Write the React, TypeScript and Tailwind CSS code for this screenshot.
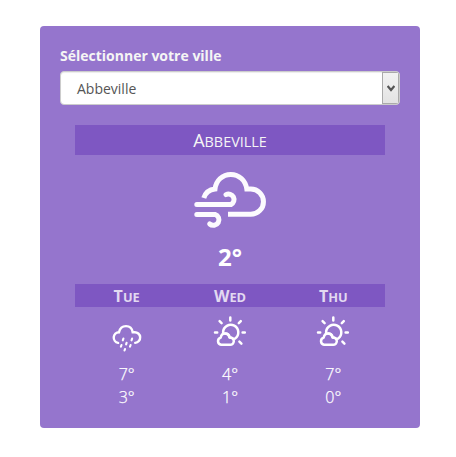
import React from 'react';

function GustsIcon() {
  return (
    <svg className="block h-16 w-20" viewBox="190 168 80 64" fill="none" stroke="#fcfafe" strokeWidth="5">
      <path d="M203.8 198 C205.3 193 209.5 189.6 215 189 C216 180.5 222.5 174.4 230.8 174.4 C239 174.4 245.6 180.4 246.8 189 H250.8 A12.65 12.65 0 0 1 250.8 214.3 H228" />
      <path strokeLinecap="round" d="M196.8 204.4 H231 A5.4 5.4 0 1 0 226 194.6" />
      <path strokeLinecap="round" d="M196.8 214.4 H215 A5.6 5.6 0 1 1 209.7 224" />
    </svg>
  );
}

function RainIcon() {
  return (
    <svg className="block h-9 w-9" viewBox="109.2 316 36 36" fill="none" stroke="#fff" strokeWidth="2.4" strokeLinecap="round">
      <path d="M118.3 342.9 A5.4 5.4 0 0 1 119.2 332.2 C120 328.4 122.8 326.1 126.2 326.1 C129.6 326.1 132.3 328.4 132.9 332.2 H134.6 A5.35 5.35 0 0 1 135.4 342.9" />
      <path strokeWidth="2.1" d="M123.6 338.6l-.6 1.7M132.3 338.6l-.6 1.7M126.8 342.7l-.5 1.7M121.7 345l-.6 1.7M130.8 345l-.6 1.7M125.2 349.1l-.5 1.4" />
    </svg>
  );
}

function SunCloudIcon() {
  return (
    <svg className="block h-9 w-9" viewBox="212.3 316 36 36" fill="none" stroke="#fff" strokeWidth="2.5" strokeLinecap="round" strokeLinejoin="round">
      <path d="M230.6 317.6v2.8M219.9 321.2l2 2M241.1 321.2l-2 2M215.3 332.4h2.2M242.9 332.4h2.2M239.7 341.6l2 2" />
      <path d="M223.4 332.2 A7.6 7.6 0 1 1 235.4 338.6" />
      <path d="M221.4 344.8 A3.7 3.7 0 0 1 221 337.6 C221.4 335.2 223 333.5 225.3 333.5 C227.8 333.5 229.3 335.3 229.8 337.6 L230.6 337.6 A3.6 3.6 0 0 1 230.4 344.8 Z" />
      <path d="M225.4 333.5 C228.4 333.6 229.6 335.2 230 337.4 C232 337.4 233.2 338 233.8 339.3" />
    </svg>
  );
}

function SmallCaps({ text }: { text: string }) {
  return (
    <span>
      {text[0]}
      <span className="text-[0.8em] uppercase">{text.slice(1)}</span>
    </span>
  );
}

const days = [
  { name: 'Tue', high: '7°', low: '3°', Icon: RainIcon },
  { name: 'Wed', high: '4°', low: '1°', Icon: SunCloudIcon },
  { name: 'Thu', high: '7°', low: '0°', Icon: SunCloudIcon },
];

export default function App() {
  return (
    <div className="h-[457px] w-[456px] bg-white pl-10 pt-[26px] font-['Open_Sans',sans-serif]">
      <div className="h-[402px] w-[380px] rounded-[4px] bg-[#9575cd] px-5 pt-5 text-[#f5f5f5]">
        <div className="h-[25px] text-sm font-bold leading-5">Sélectionner votre ville</div>
        <div className="flex h-[34px] w-[340px] overflow-hidden rounded-[4px] border border-[#ccc] bg-white shadow-[inset_0_1px_1px_rgba(0,0,0,0.075)]">
          <span className="flex-1 pl-4 text-sm leading-[34px] text-[#555]">Abbeville</span>
          <span className="flex w-[17px] items-center justify-center border border-[#aaa] bg-linear-to-b from-[#f2f2f2] to-[#e3e3e3]">
            <svg className="block h-[7px] w-2" viewBox="0 0 8 7" fill="none" stroke="#555" strokeWidth="2.2">
              <path d="M.6 1 4 5 7.4 1" />
            </svg>
          </span>
        </div>
        <div className="mx-[15px] mt-5">
          <div className="h-[30px] bg-[#7e57c2] text-center text-lg leading-[31px]">
            <SmallCaps text="Abbeville" />
          </div>
          <div className="mt-[13px] flex justify-center">
            <GustsIcon />
          </div>
          <div className="mt-[8px] h-[33px] text-center text-2xl font-bold leading-[33px] text-white">2°</div>
          <div className="mt-[11px] grid h-[23px] grid-cols-3 bg-[#7e57c2] text-center text-base font-bold leading-[24px] text-[#e2d9f1]">
            {days.map((d) => (
              <SmallCaps key={d.name} text={d.name} />
            ))}
          </div>
          <div className="mt-[9px] grid grid-cols-3 text-center text-base font-light leading-[23px] text-white">
            {days.map(({ name, high, low, Icon }) => (
              <div key={name} className="flex flex-col items-center">
                <Icon />
                <span className="mt-[11px] [-webkit-text-stroke:0.25px_white]">{high}</span>
                <span className="[-webkit-text-stroke:0.25px_white]">{low}</span>
              </div>
            ))}
          </div>
        </div>
      </div>
    </div>
  );
}
